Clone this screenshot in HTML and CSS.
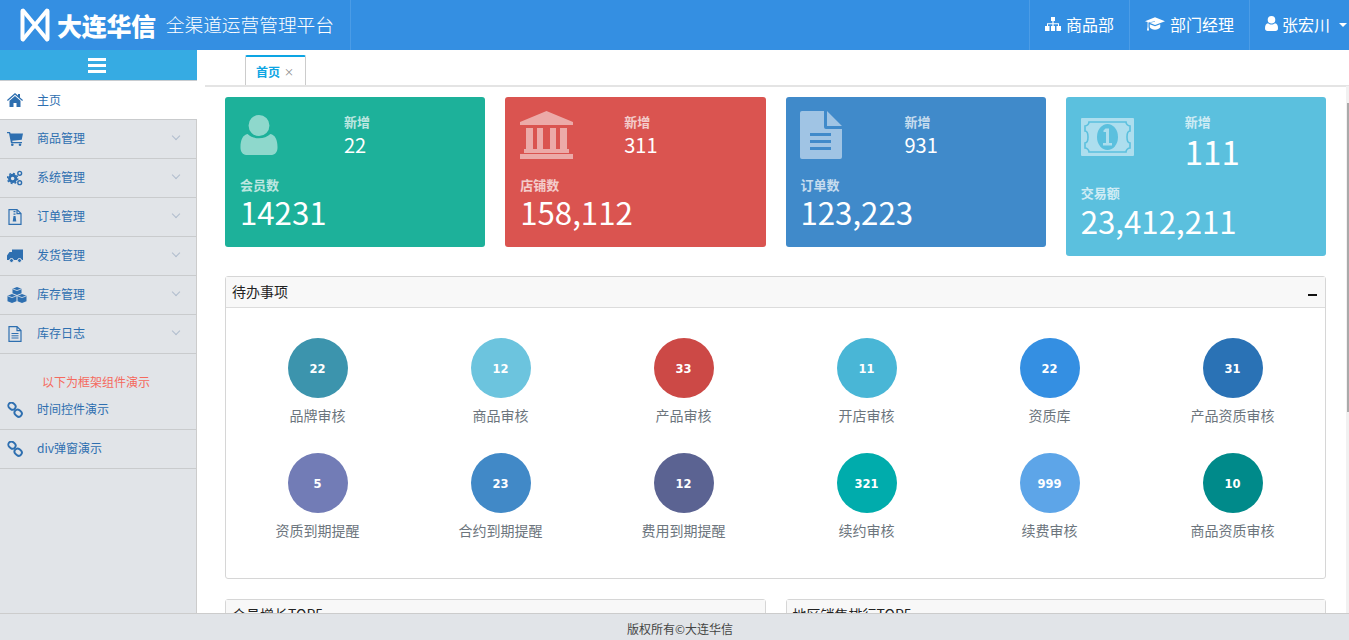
FILE: index.html
```html
<!DOCTYPE html>
<html lang="zh-CN">
<head>
	<meta charset="utf-8" />
	<title>全渠道运营管理平台</title>
	<link rel="stylesheet" href="styles.css">
</head>
<body>
	<svg class="defs" width="0" height="0">
		<symbol id="i-link" viewBox="0 0 20 20"><g fill="none" stroke="currentColor" stroke-width="2.400"><rect x="1.500" y="1.200" width="9.500" height="7.600" rx="3.800" transform="rotate(40 6 5)"/><rect x="9.200" y="10.200" width="9.500" height="7.600" rx="3.800" transform="rotate(40 14 14)"/></g></symbol>
	</svg>

	<header class="top">
		<div class="brand">
			<svg class="logo" viewBox="0 0 30 34"><g fill="none" stroke="#fff" stroke-linecap="round"><path stroke-width="4" d="M2.500 3v28M27.500 3v28"/><path stroke-width="4" d="M3 2.500l24 29M27 2.500l-24 29"/></g></svg>
			<span class="brand-name">大连华信</span>
			<span class="brand-sub">全渠道运营管理平台</span>
		</div>
		<nav class="top-nav">
			<a class="top-link dept">
				<svg viewBox="0 0 16 14"><path fill="#fff" d="M6 0h4v4H8.600v2.200H14V9h2v5h-4.500V9h1.500V7.300H8.600V9H10v5H6V9h1.400V7.300H3V9h1.500v5H0V9h2V6.200h5.400V4H6z"/></svg>
				商品部
			</a>
			<a class="top-link role">
				<svg viewBox="0 0 21 14"><path fill="#fff" d="M10.500 0L21 4l-10.500 4L4.800 5.800l5.800-1.100-.2-.7L3.600 5.300V10l.7 3.800H2l.7-3.800V5L0 4zM5 7.200l5.500 2.100 5.500-2.100v3.300c-1 1.600-3 2.500-5.500 2.500S6 12.100 5 10.500z"/></svg>
				部门经理
			</a>
			<a class="top-link user">
				<svg viewBox="0 0 13 15"><path fill="#fff" d="M6.500 0a3.800 3.800 0 1 1 0 7.600 3.800 3.800 0 0 1 0-7.600zM3 7.200c1 .9 2.200 1.300 3.500 1.300S9 8.100 10 7.200c2 .3 3 1.900 3 5 0 1.800-1 2.800-2.500 2.800h-8C1 15 0 14 0 12.200c0-3.100 1-4.700 3-5z"/></svg>
				张宏川
				<i class="caret"></i>
			</a>
		</nav>
	</header>

	<div class="body-row">
		<aside class="side">
			<div class="side-toggle"><span></span><span></span><span></span></div>
			<a class="menu-item active">
				<svg class="menu-icon" viewBox="0 0 16 14"><path fill="currentColor" d="M8 0l3 2.600V1h2v3.400L16 7l-.8.900L8 1.700.8 7.900 0 7zM8 3l5.500 4.700V14H9.500v-4h-3v4h-4V7.700z"/></svg>
				<span>主页</span>
			</a>
			<a class="menu-item">
				<svg class="menu-icon" viewBox="0 0 16 14"><path fill="currentColor" d="M0 0h3l.6 1.500H16l-1.300 6.300-9.500 1 .3 1.200h9.500v1.300H4L2 1.300H0z"/><circle fill="currentColor" cx="5.300" cy="12.700" r="1.300"/><circle fill="currentColor" cx="13" cy="12.700" r="1.300"/></svg>
				<span>商品管理</span><i class="chev"></i>
			</a>
			<a class="menu-item">
				<svg class="menu-icon" viewBox="0 0 17 16"><g fill="none" stroke="currentColor"><circle cx="6" cy="8.500" r="3.400" stroke-width="3"/><circle cx="6" cy="8.500" r="5.400" stroke-width="1.600" stroke-dasharray="2 2.200"/><circle cx="13.500" cy="3" r="2" stroke-width="1.500"/><circle cx="13.500" cy="13" r="2" stroke-width="1.500"/></g></svg>
				<span>系统管理</span><i class="chev"></i>
			</a>
			<a class="menu-item">
				<svg class="menu-icon" viewBox="0 0 16 16"><path fill="none" stroke="currentColor" stroke-width="1.200" d="M2 .6h8l4 4v10.800H2zM10 .6v4h4"/><path fill="currentColor" d="M6.500 2h2v1.300h-2zM6.500 4.500h2v1.300h-2zM6.500 7h2l.8 5.500H5.700z"/></svg>
				<span>订单管理</span><i class="chev"></i>
			</a>
			<a class="menu-item">
				<svg class="menu-icon" viewBox="0 0 16 13"><path fill="currentColor" d="M5 0h11v10.500H6.300a2 2 0 0 0-3.600 0H0V6l2.500-3.500H5z"/><circle fill="currentColor" stroke="#e1e4e8" cx="4.500" cy="11" r="2"/><circle fill="currentColor" stroke="#e1e4e8" cx="12.500" cy="11" r="2"/></svg>
				<span>发货管理</span><i class="chev"></i>
			</a>
			<a class="menu-item">
				<svg class="menu-icon wide" viewBox="0 0 20 16"><g fill="currentColor"><path d="M10 0l4.500 1.800v4.400L10 8 5.500 6.200V1.800z"/><path d="M5 7l4.500 1.800v5.400L5 16 .5 14.200V8.800z"/><path d="M15 7l4.500 1.800v5.400L15 16l-4.500-1.800V8.800z"/></g><g stroke="#e1e4e8" stroke-width=".8" fill="none"><path d="M5.500 1.800L10 3.600l4.500-1.800M.5 8.800L5 10.600l4.500-1.800M10.500 8.800l4.500 1.800 4.500-1.800"/></g></svg>
				<span>库存管理</span><i class="chev"></i>
			</a>
			<a class="menu-item">
				<svg class="menu-icon" viewBox="0 0 16 16"><path fill="none" stroke="currentColor" stroke-width="1.200" d="M2 .6h8l4 4v10.800H2zM10 .6v4h4"/><path stroke="currentColor" d="M4.500 7.500h7M4.500 9.800h7M4.500 12h7"/></svg>
				<span>库存日志</span><i class="chev"></i>
			</a>
			<p class="side-note">以下为框架组件演示</p>
			<a class="menu-item demo">
				<svg class="menu-icon"><use href="#i-link"/></svg>
				<span>时间控件演示</span>
			</a>
			<a class="menu-item demo">
				<svg class="menu-icon"><use href="#i-link"/></svg>
				<span>div弹窗演示</span>
			</a>
		</aside>

		<div class="content">
			<div class="tabs">
				<div class="tab"><b>首页</b><em>×</em></div>
			</div>
			<main class="scroll">
				<section class="cards">
					<div class="card green">
						<div class="card-top">
							<svg class="card-icon" viewBox="0 0 40 42"><path fill="currentColor" d="M20 0a11 11 0 1 1 0 22 11 11 0 0 1 0-22zM8 20c3 3 7.500 4.500 12 4.500S29 23 32 20c5 1 7.500 6 7.500 14 0 5-2.500 8-6 8h-27c-3.500 0-6-3-6-8 0-8 2.500-13 7.500-14z"/></svg>
							<div class="card-new"><small>新增</small><span>22</span></div>
						</div>
						<small>会员数</small>
						<strong>14231</strong>
					</div>
					<div class="card red">
						<div class="card-top">
							<svg class="card-icon bank" viewBox="0 0 53 48"><path fill="currentColor" d="M26.500 0L53 11v3H0v-3zM6 17h7v21H6zM17 17h6v21h-6zM30 17h6v21h-6zM40 17h7v21h-7zM4 38h45v4H4zM0 43h53v5H0z"/></svg>
							<div class="card-new"><small>新增</small><span>311</span></div>
						</div>
						<small>店铺数</small>
						<strong>158,112</strong>
					</div>
					<div class="card blue">
						<div class="card-top">
							<svg class="card-icon doc" viewBox="0 0 42 48"><path fill="currentColor" d="M2 0h22v16a2 2 0 0 0 2 2h16v28a2 2 0 0 1-2 2H2a2 2 0 0 1-2-2V2a2 2 0 0 1 2-2zM27 0l15 15H27zM10 22v3h21v-3zM10 29v3h21v-3zM10 36v3h21v-3z" fill-rule="evenodd"/></svg>
							<div class="card-new"><small>新增</small><span>931</span></div>
						</div>
						<small>订单数</small>
						<strong>123,223</strong>
					</div>
					<div class="card cyan">
						<div class="card-top tall">
							<svg class="card-icon cash" viewBox="0 0 53 38">
								<rect width="53" height="38" rx="1" fill="#addeee"/>
								<path fill="none" stroke="#5bc0de" stroke-width="1.600" d="M8 4h37c0 2 2 4 4 4v5c-2 0-3 3-3 6s1 6 3 6v5c-2 0-4 2-4 4H8c0-2-2-4-4-4v-5c2 0 3-3 3-6s-1-6-3-6V8c2 0 4-2 4-4z"/>
								<ellipse cx="26.500" cy="19" rx="10.500" ry="13" fill="#5bc0de"/>
								<path fill="#addeee" d="M24.500 10.500h3.500V25h3v2.500h-9V25h3V14h-2.500v-1.500z"/>
							</svg>
							<div class="card-new big"><small>新增</small><span>111</span></div>
						</div>
						<small>交易额</small>
						<strong>23,412,211</strong>
					</div>
				</section>

				<section class="panel todo">
					<div class="panel-head">待办事项<i class="minus"></i></div>
					<div class="todo-grid">
						<div class="todo-item"><b class="c1">22</b><span>品牌审核</span></div>
						<div class="todo-item"><b class="c2">12</b><span>商品审核</span></div>
						<div class="todo-item"><b class="c3">33</b><span>产品审核</span></div>
						<div class="todo-item"><b class="c4">11</b><span>开店审核</span></div>
						<div class="todo-item"><b class="c5">22</b><span>资质库</span></div>
						<div class="todo-item"><b class="c6">31</b><span>产品资质审核</span></div>
						<div class="todo-item"><b class="c7">5</b><span>资质到期提醒</span></div>
						<div class="todo-item"><b class="c8">23</b><span>合约到期提醒</span></div>
						<div class="todo-item"><b class="c9">12</b><span>费用到期提醒</span></div>
						<div class="todo-item"><b class="c10">321</b><span>续约审核</span></div>
						<div class="todo-item"><b class="c11">999</b><span>续费审核</span></div>
						<div class="todo-item"><b class="c12">10</b><span>商品资质审核</span></div>
					</div>
				</section>

				<section class="panel-row">
					<div class="panel"><div class="panel-head">会员增长TOP5</div></div>
					<div class="panel"><div class="panel-head">地区销售排行TOP5</div></div>
				</section>
			</main>
			<div class="scrollbar"><i></i></div>
		</div>
	</div>

	<footer class="foot">版权所有©大连华信</footer>
</body>
</html>
```

FILE: styles.css
```css
* {
	box-sizing: border-box;
}

html, body {
	height: 100%;
	margin: 0;
	overflow: hidden;
}

body {
	display: flex;
	flex-direction: column;
	font-family: "Noto Sans CJK SC", "Open Sans", sans-serif;
	font-size: 13px;
	color: #212529;
	background: #fff;
}

.defs {
	position: absolute;
}

svg {
	display: block;
	flex: none;
}


/*Header*/
.top {
	flex: none;
	height: 50px;
	display: flex;
	justify-content: space-between;
	background: #348fe2;
	color: #fff;
}

.brand {
	width: 351px;
	display: flex;
	align-items: center;
	padding-left: 20px;
	border-right: 1px solid #4b9ce6;
}
.logo {
	width: 30px;
	height: 34px;
}
.brand-name {
	margin-left: 7px;
	font-size: 25px;
	font-weight: 900;
	letter-spacing: -0.3px;
}
.brand-sub {
	margin: 0 0 4px 10px;
	font-size: 18.7px;
	font-weight: 300;
}

.top-nav {
	display: flex;
}
.top-link {
	display: flex;
	align-items: center;
	gap: 5px;
	padding-bottom: 3px;
	font-size: 16px;
	border-left: 1px solid #4b9ce6;
}
.top-link svg {
	height: 14px;
	width: auto;
}
.dept {
	width: 100px;
	padding-left: 15px;
}
.dept svg {
	width: 16px;
}
.role {
	width: 120px;
	padding-left: 15px;
}
.role svg {
	width: 20px;
}
.user {
	width: 100px;
	padding-left: 15px;
	gap: 4px;
}
.user svg {
	width: 13px;
	height: 15px;
}
.caret {
	margin: 2px 0 0 5px;
	border: 4px solid transparent;
	border-top-color: #fff;
	border-bottom: 0;
}


/*Layout*/
.body-row {
	flex: 1;
	min-height: 0;
	display: flex;
}


/*Sidebar*/
.side {
	flex: none;
	width: 197px;
	background: #e1e4e8;
	border-right: 1px solid #ccc;
}
.side-toggle {
	height: 31px;
	display: flex;
	flex-direction: column;
	justify-content: center;
	align-items: center;
	gap: 3px;
	padding-right: 3px;
	background: #36abe3;
	border-bottom: 1px solid #c8ccd0;
	margin-right: -1px;
}
.side-toggle span {
	width: 18px;
	height: 3px;
	background: #fff;
}
.menu-item {
	position: relative;
	height: 39px;
	display: flex;
	align-items: center;
	padding-left: 7px;
	border-bottom: 1px solid #c9cbcd;
	color: #2e6fb0;
	font-size: 12px;
}
.menu-item.active {
	background: #fff;
	margin-right: -1px;
}
.menu-item span {
	margin: 0 0 4px 14px;
}
.menu-item.active span {
	margin-bottom: 2px;
}
.menu-icon {
	width: 16px;
	height: 16px;
}
.menu-icon.wide {
	width: 20px;
}
.menu-icon.wide + span {
	margin-left: 10px;
}
.chev {
	position: absolute;
	right: 17px;
	top: 13px;
	width: 6px;
	height: 6px;
	border-right: 1px solid #b0bdcd;
	border-bottom: 1px solid #b0bdcd;
	transform: rotate(45deg);
}
.side-note {
	margin: 19px 0 0;
	height: 18px;
	padding-left: 42px;
	font-size: 12px;
	line-height: 17px;
	color: #f56a5e;
}
.demo {
	height: 39px;
}


/*Content*/
.content {
	position: relative;
	flex: 1;
	min-width: 0;
	display: flex;
	flex-direction: column;
}

.tabs {
	flex: none;
	height: 37px;
	margin-left: 8px;
	padding: 5px 0 0 40px;
	border-bottom: 2px solid #e4e4e4;
}
.tab {
	width: 61px;
	height: 30px;
	display: flex;
	align-items: center;
	gap: 4px;
	padding-left: 10px;
	background: #fff;
	border: 1px solid #ccc;
	border-top: 2px solid #0da5e3;
	border-bottom: 0;
	border-radius: 2px 2px 0 0;
}
.tab b {
	font-size: 12px;
	color: #0da5e3;
}
.tab em {
	font-style: normal;
	font-size: 10px;
	color: #888;
}

.scroll {
	flex: 1;
	min-height: 0;
	overflow: hidden;
	padding: 10px 23px 0 28px;
}

.scrollbar {
	position: absolute;
	right: 0;
	top: 36px;
	bottom: 0;
	width: 3px;
	background: #f1f1f1;
}
.scrollbar i {
	display: block;
	width: 2px;
	height: 309px;
	margin: 17px 0 0 1px;
	background: #aaa;
}


/*Cards*/
.cards {
	display: flex;
	align-items: flex-start;
	gap: 20px;
}
.card {
	flex: 1;
	height: 150px;
	padding: 14px 15px 0;
	border-radius: 3px;
	color: #fff;
}
.card > small {
	display: block;
	font-size: 13px;
	font-weight: 700;
	line-height: 19px;
	opacity: 0.7;
}
.card strong {
	display: block;
	font-size: 31.200px;
	font-weight: 400;
	line-height: 36px;
}
.card-top {
	height: 64px;
	display: flex;
	align-items: flex-start;
}
.card-icon {
	width: 38px;
	height: 42px;
	margin-top: 3px;
	opacity: 0.5;
}
.card-icon.bank {
	width: 53px;
	height: 48px;
	margin-top: 0;
}
.card-icon.doc {
	width: 42px;
	height: 48px;
	margin: 0 0 0 -1px;
}
.card-icon.cash {
	width: 53px;
	height: 38px;
	margin-top: 7px;
	opacity: 1;
}
.card-new {
	position: absolute;
	margin-left: 104px;
	margin-top: 1px;
}
.card-new small {
	display: block;
	font-size: 13px;
	font-weight: 700;
	line-height: 20px;
	opacity: 0.7;
}
.card-new span {
	display: block;
	font-size: 20px;
	line-height: 26px;
}
.card-new.big small {
	line-height: 19px;
}
.card-new.big span {
	font-size: 33px;
	line-height: 36px;
	margin-top: 2px;
}
.card-top.tall {
	height: 72px;
}
.cyan {
	height: 159px;
}
.cyan strong {
	margin-top: 1px;
}
.green { background: #1db19a; }
.red { background: #da5450; }
.blue { background: #408aca; }
.cyan { background: #5bc0de; }


/*Panels*/
.panel {
	border: 1px solid #d6d6d6;
	border-radius: 3px;
	background: #fff;
}
.panel-head {
	height: 31px;
	display: flex;
	align-items: center;
	justify-content: space-between;
	padding: 0 6px 3px;
	background: #f8f8f8;
	border-bottom: 1px solid #dcdcdc;
	font-size: 14px;
	color: #222;
}
.minus {
	width: 9px;
	height: 2px;
	margin: 8px 2px 0 0;
	background: #111;
}
.todo {
	margin-top: 20px;
	height: 303px;
}
.todo-grid {
	display: grid;
	grid-template-columns: repeat(6, 183px);
	grid-auto-rows: 115px;
	padding-top: 30px;
}
.todo-item {
	display: flex;
	flex-direction: column;
	align-items: center;
	color: #6c757d;
	font-size: 14px;
}
.todo-item b {
	width: 60px;
	height: 60px;
	display: flex;
	align-items: center;
	justify-content: center;
	border-radius: 50%;
	padding-top: 1px;
	margin-bottom: 7px;
	color: #fff;
	font-family: "DejaVu Sans", sans-serif;
	font-size: 11.500px;
	font-weight: 700;
}
.c1 { background: #3c94ad; }
.c2 { background: #6cc4de; }
.c3 { background: #cc4946; }
.c4 { background: #49b6d6; }
.c5 { background: #348fe2; }
.c6 { background: #2a72b5; }
.c7 { background: #727cb6; }
.c8 { background: #4189c7; }
.c9 { background: #5b6392; }
.c10 { background: #00acac; }
.c11 { background: #5da5e8; }
.c12 { background: #008a8a; }

.panel-row {
	display: flex;
	gap: 20px;
	margin-top: 20px;
}
.panel-row .panel {
	flex: 1;
}


/*Footer*/
.foot {
	flex: none;
	height: 27px;
	padding-left: 11px;
	line-height: 30px;
	text-align: center;
	position: relative;
	z-index: 2;
	background: #e1e4e8;
	border-top: 1px solid #ccc;
	font-size: 12px;
	color: #444;
}
```
